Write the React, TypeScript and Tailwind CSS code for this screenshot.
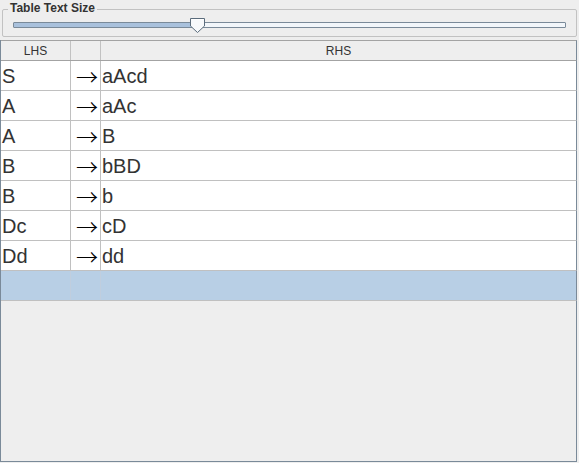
import React from "react";

const rows: [string, string][] = [
  ["S", "aAcd"],
  ["A", "aAc"],
  ["A", "B"],
  ["B", "bBD"],
  ["B", "b"],
  ["Dc", "cD"],
  ["Dd", "dd"],
];

export default function App() {
  return (
    <div className="w-[579px] h-[463px] bg-[#eeeeee] overflow-hidden font-['Liberation_Sans',Arial,sans-serif] text-[#333333]">
      {/* Slider group */}
      <div className="relative h-[40px] pt-[9px] px-[2px]">
        <div className="h-[28px] border border-[#c2c2c2] rounded-[2px]">
          <div className="relative mx-[10px] mt-[12px] h-[6px] w-[553px] border border-[#7a8a99] bg-[#f2f6fa] rounded-[1px]">
            <div className="h-full w-[184px] bg-[#a9c1dc]" />
          </div>
        </div>
        <span className="absolute left-[8px] top-[1px] px-[2px] bg-[#eeeeee] text-[12px] font-bold leading-[14px] text-[#333333]">
          Table Text Size
        </span>
        <svg className="absolute left-[189px] top-[17px]" width="17" height="17" viewBox="0 0 17 17">
          <path d="M1.5 1.5 H15.5 V9 L8.5 15.5 L1.5 9 Z" fill="#f7f9fb" stroke="#5b6c7c" strokeWidth="1" />
          <path d="M2.5 2.5 H14.5" stroke="#ffffff" />
        </svg>
      </div>

      {/* Table */}
      <div className="h-[422px] border-l border-b border-[#7a8a99] flex flex-col mr-[2px]">
        <div className="flex h-[21px] border-t border-b border-[#a3a3a3] bg-[#eeeeee] text-[12px] text-[#333333] border-r border-r-[#7a8a99]">
          <div className="w-[70px] border-r border-[#c2c2c2] flex items-center justify-center">LHS</div>
          <div className="w-[30px] border-r border-[#c2c2c2]" />
          <div className="flex-1 flex items-center justify-center">RHS</div>
        </div>
        {rows.map(([l, r], i) => (
          <div key={i} className="flex h-[30px] bg-white border-b border-[#c0c0c0] border-r border-r-[#7a8a99] text-[20px] text-[#333333]">
            <div className="w-[70px] border-r border-[#c0c0c0] flex items-center pl-[1px] leading-none">{l}</div>
            <div className="w-[30px] border-r border-[#c0c0c0] flex items-center justify-end pr-[2px] text-black font-['Noto_Sans_CJK_JP',sans-serif] font-light text-[22px] leading-none">
              <span className="block leading-none mb-[2px]">→</span>
            </div>
            <div className="flex-1 flex items-center pl-[1px] leading-none">{r}</div>
          </div>
        ))}
        <div className="flex h-[30px] bg-[#b8cfe5] border-b border-[#c0c0c0] border-r border-r-[#7a8a99]">
          <div className="w-[70px] border-r border-[#c0cede]" />
          <div className="w-[30px] border-r border-[#c0cede]" />
          <div className="flex-1" />
        </div>
        <div className="flex-1 border-r border-[#7a8a99]" />
      </div>
    </div>
  );
}
